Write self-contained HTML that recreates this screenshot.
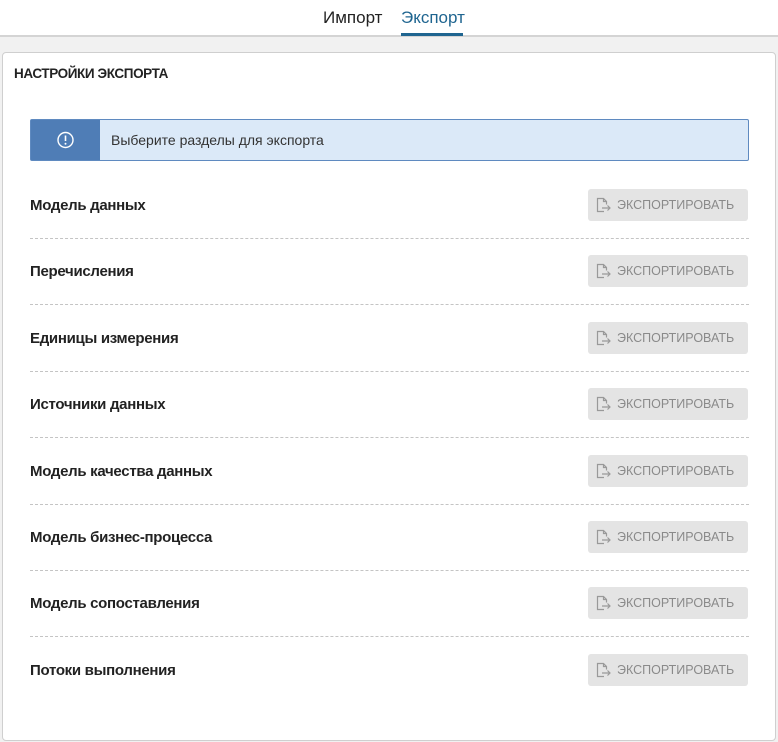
<!DOCTYPE html>
<html><head><meta charset="utf-8"><style>
*{box-sizing:border-box;margin:0;padding:0}
body{width:778px;height:742px;background:#f1f1f1;font-family:"Liberation Sans",sans-serif;position:relative;overflow:hidden}
.top{position:absolute;left:0;top:0;width:778px;height:37px;background:#fff;border-bottom:2px solid #d4d4d4}
.tab{position:absolute;top:8px;font-size:17px;color:#222}
.tab.act{color:#1f6590}
.ul{position:absolute;left:401px;top:33px;width:62px;height:3px;background:#1f6590}
.card{position:absolute;left:2px;top:52px;width:774px;height:689px;background:#fff;border:1px solid #cfcfcf;border-radius:4px}
h1{position:absolute;left:11px;top:13px;font-size:13.5px;font-weight:bold;color:#222;letter-spacing:-0.4px}
.alert{position:absolute;left:27px;top:66px;width:719px;height:42px;background:#dbe9f8;border:1px solid #5f8ac0;border-radius:2px}
.alert .ic{position:absolute;left:0;top:0;width:69px;height:40px;background:#4f7db6}
.alert .t{position:absolute;left:80px;top:12px;font-size:14px;color:#333}
.row{position:absolute;left:27px;width:719px;height:66px}
.row .l{position:absolute;left:0;top:8px;font-size:15px;font-weight:bold;color:#222;letter-spacing:-0.3px}
.row .b{position:absolute;left:558px;top:0;width:160px;height:32px;background:#e4e4e4;border-radius:3px;font-size:12.5px;color:#8a8a8a}
.row .b span{position:absolute;left:29px;top:9px}
.row .b svg{position:absolute;left:7px;top:8px}
.row .d{position:absolute;left:0;top:49px;width:719px;border-top:1px dashed #c4c4c4}
</style></head><body>
<div class="top"><span class="tab" style="left:323px">Импорт</span><span class="tab act" style="left:401px">Экспорт</span><div class="ul"></div></div>
<div class="card">
<h1>НАСТРОЙКИ ЭКСПОРТА</h1>
<div class="alert"><div class="ic"><svg width="69" height="40"><circle cx="34.5" cy="20" r="7.5" fill="none" stroke="#fff" stroke-width="1.4"/><line x1="34.5" y1="15.5" x2="34.5" y2="21" stroke="#fff" stroke-width="1.6"/><circle cx="34.5" cy="23.8" r="1" fill="#fff"/></svg></div><div class="t">Выберите разделы для экспорта</div></div>
</div>
<div id="rows"></div>
<script>
var n=["Модель данных","Перечисления","Единицы измерения","Источники данных","Модель качества данных","Модель бизнес-процесса","Модель сопоставления","Потоки выполнения"];
var h="";
var svg='<svg width="18" height="16" viewBox="0 0 18 16"><path d="M9 14.5H2.5V1.5h6l3 3v3" fill="none" stroke="#999" stroke-width="1.2"/><path d="M8.5 1.5v3h3" fill="none" stroke="#999" stroke-width="1.2"/><path d="M7 11h8M12.5 8.5L15 11l-2.5 2.5" fill="none" stroke="#999" stroke-width="1.2"/></svg>';
for(var i=0;i<8;i++){var y=189+i*66.4;h+='<div class="row" style="left:30px;top:'+y+'px"><div class="l">'+n[i]+'</div><div class="b">'+svg+'<span>ЭКСПОРТИРОВАТЬ</span></div>'+(i<7?'<div class="d"></div>':'')+'</div>';}
document.getElementById("rows").innerHTML=h;
</script>
</body></html>
